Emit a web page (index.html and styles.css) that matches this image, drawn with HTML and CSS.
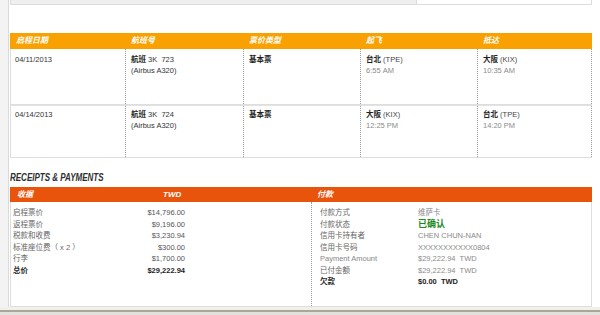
FILE: index.html
```html
<!DOCTYPE html>
<html lang="zh-CN">
<head>
<meta charset="utf-8">
<title>Itinerary</title>
<link rel="stylesheet" href="styles.css">
</head>
<body>
<div class="page">
  <div class="frame">
    <div class="topbox"><div class="tb-left"></div><div class="tb-right"></div></div>

    <div class="flights">
      <div class="fhead">
        <div>启程日期</div><div>航班号</div><div>票价类型</div><div>起飞</div><div>抵达</div>
      </div>
      <div class="frow r1">
        <div class="c">04/11/2013</div>
        <div class="c"><b>航班</b> 3K&nbsp; 723<br>(Airbus A320)</div>
        <div class="c"><b>基本票</b></div>
        <div class="c"><b>台北</b> <span class="code">(TPE)</span><br><span class="time">6:55 AM</span></div>
        <div class="c"><b>大阪</b> <span class="code">(KIX)</span><br><span class="time">10:35 AM</span></div>
      </div>
      <div class="frow r2">
        <div class="c">04/14/2013</div>
        <div class="c"><b>航班</b> 3K&nbsp; 724<br>(Airbus A320)</div>
        <div class="c"><b>基本票</b></div>
        <div class="c"><b>大阪</b> <span class="code">(KIX)</span><br><span class="time">12:25 PM</span></div>
        <div class="c"><b>台北</b> <span class="code">(TPE)</span><br><span class="time">14:20 PM</span></div>
      </div>
    </div>

    <div class="rp-titlebar"><h2 class="rp-title">RECEIPTS &amp; PAYMENTS</h2></div>

    <div class="rp">
      <div class="rp-head">
        <div class="rh-left"><span class="rh-label">收据</span><span class="rh-cur">TWD</span></div>
        <div class="rh-right">付款</div>
      </div>
      <div class="rp-body">
        <div class="receipts">
          <div class="rrow"><span class="rl">启程票价</span><span class="ra">$14,796.00</span></div>
          <div class="rrow"><span class="rl">返程票价</span><span class="ra">$9,196.00</span></div>
          <div class="rrow"><span class="rl">税款和收费</span><span class="ra">$3,230.94</span></div>
          <div class="rrow"><span class="rl">标准座位费（ x 2 ）</span><span class="ra">$300.00</span></div>
          <div class="rrow"><span class="rl">行李</span><span class="ra">$1,700.00</span></div>
          <div class="rrow total"><span class="rl">总价</span><span class="ra">$29,222.94</span></div>
        </div>
        <div class="payments">
          <div class="prow"><span class="pl">付款方式</span><span class="pv">维萨卡</span></div>
          <div class="prow"><span class="pl">付款状态</span><span class="pv ok">已确认</span></div>
          <div class="prow"><span class="pl">信用卡持有者</span><span class="pv">CHEN CHUN-NAN</span></div>
          <div class="prow"><span class="pl">信用卡号码</span><span class="pv">XXXXXXXXXXX0804</span></div>
          <div class="prow"><span class="pl en">Payment Amount</span><span class="pv">$29,222.94&nbsp; TWD</span></div>
          <div class="prow"><span class="pl">已付金额</span><span class="pv">$29,222.94&nbsp; TWD</span></div>
          <div class="prow total"><span class="pl">欠款</span><span class="pv">$0.00&nbsp; TWD</span></div>
        </div>
      </div>
    </div>
  </div>
  <div class="footer"></div>
</div>
</body>
</html>
```
FILE: styles.css
```css
* { box-sizing: border-box; }

html, body {
  margin: 0;
  padding: 0;
}

body {
  background: #f3f3f3;
  font-family: "Liberation Sans", "Noto Sans CJK SC", sans-serif;
  font-size: 7.5px;
  color: #333;
}

.page {
  width: 600px;
  height: 315px;
  display: flex;
  flex-direction: column;
  overflow: hidden;
}

.frame {
  flex: 1;
  margin-left: 8px;
  border-left: 1px solid #dadada;
  background: #fff;
  padding: 0 8px 0 1px;
}

/* top box (bottom of previous panel) */
.topbox {
  display: flex;
  height: 5px;
  border: 1px solid #dcdcdc;
  border-top: none;
}
.tb-left {
  width: 406px;
  background: #efefef;
  border-right: 1px solid #dcdcdc;
}
.tb-right { flex: 1; }

/* flights table */
.flights { margin-top: 28px; }

.fhead {
  display: grid;
  grid-template-columns: 115px 118px 117px 117px 115px;
  height: 16px;
  background: #f8a100;
  color: #fff;
  font-weight: bold;
  font-style: italic;
  font-size: 8px;
  line-height: 16px;
}
.fhead > div { padding-left: 6px; }

.frow {
  display: grid;
  grid-template-columns: 114px 118px 117px 117px 115px;
  border-left: 1px solid #dedede;
  line-height: 11px;
  color: #333;
}
.frow.r1 {
  height: 56px;
  border-bottom: 1px solid #dedede;
}
.frow.r2 {
  height: 53px;
  border-top: 1px solid #e2e2e2;
  border-bottom: 1px solid #dedede;
}
.frow .c {
  padding-left: 5px;
  border-left: 1px dotted #9a9a9a;
}
.frow .c:first-child {
  border-left: none;
  padding-left: 4px;
}
.frow .c:last-child { border-right: 1px dotted #9a9a9a; }
.frow.r1 .c { padding-top: 5px; }
.frow.r2 .c { padding-top: 3px; }
.frow b { color: #1e1e1e; }
.code { color: #444; }
.time { color: #8a8a8a; }

/* receipts & payments */
.rp-titlebar {
  margin-top: 14px;
  margin-bottom: 3px;
}
.rp-title {
  margin: 0;
  font-family: "Liberation Sans", sans-serif;
  font-size: 10px;
  line-height: 12px;
  font-weight: bold;
  font-style: italic;
  color: #2e2e2e;
  transform: scaleX(0.8);
  transform-origin: left center;
}

.rp-head {
  display: flex;
  height: 15px;
  background: #e8540c;
  color: #fff;
  font-weight: bold;
  font-style: italic;
  font-size: 8px;
  line-height: 15px;
}
.rh-left {
  width: 301px;
  display: flex;
  padding-left: 7px;
}
.rh-label { width: 146px; }
.rh-right {
  flex: 1;
  padding-left: 6px;
}

.rp-body {
  display: flex;
  height: 105px;
  border: 1px solid #dedede;
  border-top: none;
  line-height: 11.5px;
}

.receipts {
  width: 300px;
  padding: 5px 0 0 2px;
}
.rrow { display: flex; }
.rl {
  width: 110px;
  color: #666;
}
.ra {
  width: 62px;
  text-align: right;
  color: #555;
}
.rrow.total .rl,
.rrow.total .ra {
  font-weight: bold;
  color: #1e1e1e;
}

.payments {
  flex: 1;
  border-left: 1px dotted #9a9a9a;
  padding: 5px 0 0 8px;
}
.prow { display: flex; }
.pl {
  width: 98px;
  color: #666;
}
.pl.en { color: #888; }
.pv { color: #8a8a8a; }
.pv.ok {
  color: #1d8a1d;
  font-weight: bold;
  font-size: 9px;
}
.prow.total .pl,
.prow.total .pv {
  font-weight: bold;
  color: #1e1e1e;
}

.footer {
  height: 8px;
  background: linear-gradient(to bottom, #f2f0e8 0, #f2f0e8 3px, #a9a69c 3px, #a9a69c 5px, #e3e1db 5px);
}
```
